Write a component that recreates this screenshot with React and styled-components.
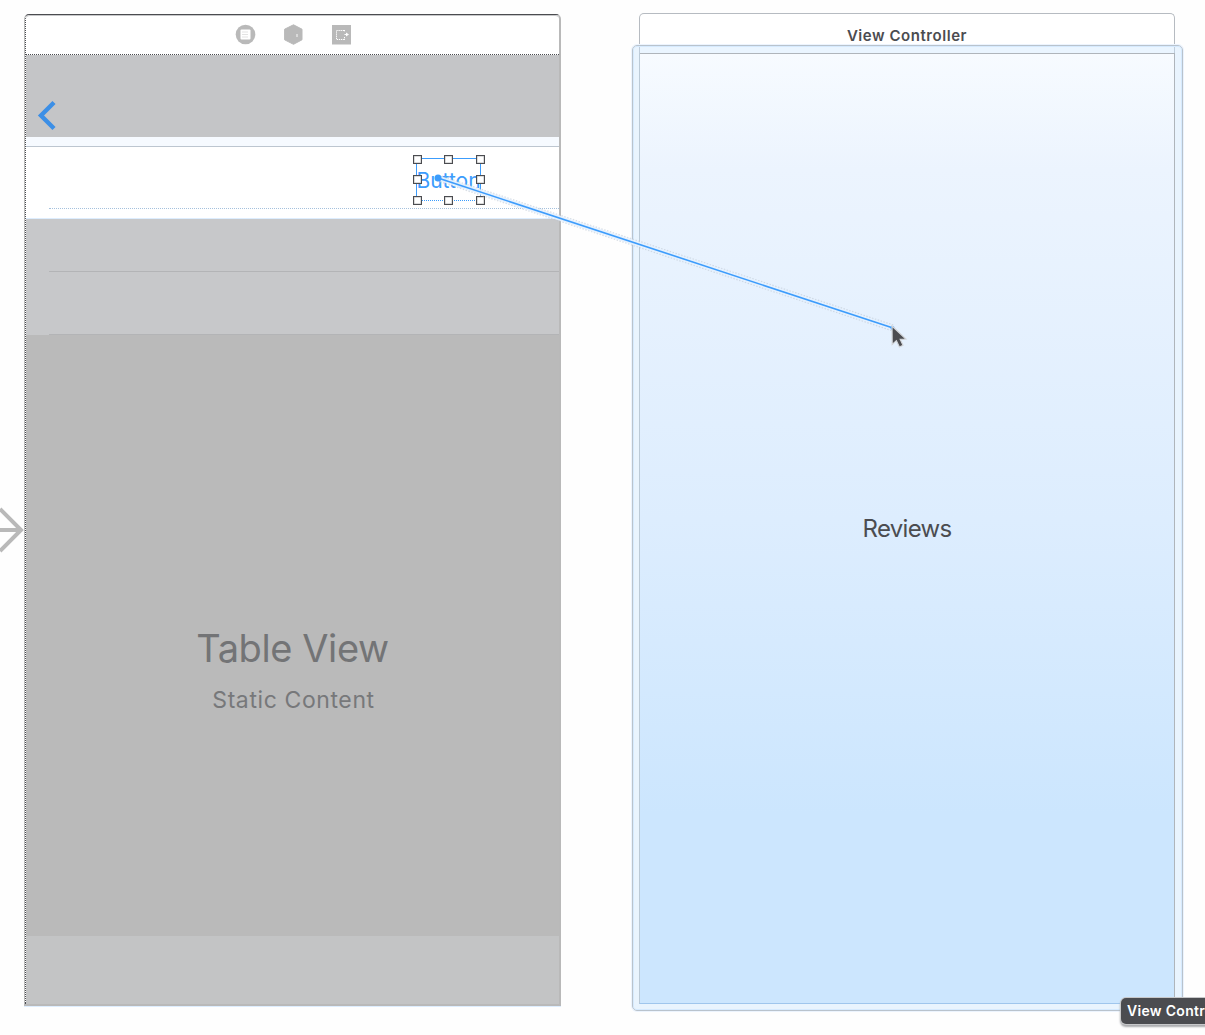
import React from "react";
import styled, { createGlobalStyle } from "styled-components";

const GlobalStyle = createGlobalStyle`
  * { box-sizing: border-box; }
  html, body { margin: 0; background: #fff; overflow: hidden; }
`;

const Canvas = styled.main`
  position: relative;
  display: flex;
  gap: 78px;
  width: 1205px;
  height: 1035px;
  padding: 13px 0 0 24px;
  overflow: hidden;
  background: #fefefe;
  font-family: Inter, "Liberation Sans", sans-serif;
`;

const TableScene = styled.section`
  display: flex;
  flex-direction: column;
  flex: none;
  width: 537px;
  height: 992px;
  margin-top: 1px;
  border-top: 1px solid #4b4c50;
  border-left: 1px solid #b9b9b9;
  border-right: 2px solid #b9b9b9;
  border-bottom: 2px solid #b9b9b9;
  border-radius: 5px 5px 0 0;
  box-shadow: 0 1px 0 #ddedfe;
`;

const SceneBody = styled.div`
  display: flex;
  flex: 1;
  flex-direction: column;
  border-left: 1px dotted #4b4c50;
  border-radius: 4px 0 0 0;
`;

const Dock = styled.header`
  display: flex;
  align-items: center;
  justify-content: center;
  gap: 27px;
  height: 40px;
  padding: 0 0 2px 2px;
  border-top: 1px solid #c7c8ca;
  border-bottom: 1px dotted #4b4c50;
  border-radius: 4px 4px 0 0;
  background: #fff;
`;

const DockIcon = styled.svg`
  display: block;
  width: 21px;
  height: 21px;
`;

const NavigationBar = styled.div`
  display: flex;
  align-items: flex-end;
  height: 82px;
  padding: 0 0 5px 11px;
  background: #c4c5c7;
`;

const BackChevron = styled.svg`
  width: 20px;
  height: 32px;
`;

const SectionGap = styled.div`
  height: 10px;
  border-bottom: 1px solid #bdc6d0;
  background: #f6faff;
`;

const ActiveCell = styled.div`
  display: flex;
  flex-direction: column;
  align-items: flex-end;
  height: 72px;
  padding: 11px 0 0 23px;
  border-bottom: 1px solid #ddedfe;
  background: #fff;
`;

const SelectedButton = styled.div`
  position: relative;
  display: flex;
  align-items: center;
  justify-content: center;
  width: 65px;
  height: 43px;
  margin-right: 78px;
  padding-top: 1px;
  border: 1px solid #3c9cfc;
  border-bottom-style: dotted;
  color: #3c9cfc;
  font-size: 21px;
  line-height: 25px;
  letter-spacing: 0;
  white-space: nowrap;
`;

const Handle = styled.i`
  position: absolute;
  top: calc(${({ $y }) => $y} - 4.5px);
  left: calc(${({ $x }) => $x} - 4.5px);
  width: 9px;
  height: 9px;
  border: 1px solid #4b4c50;
  box-shadow: inset 0 0 0 0.5px #b9b9b9;
  background: #fff;
`;

const CellSeparator = styled.div`
  align-self: stretch;
  height: 1px;
  margin-top: 7px;
  border-top: 1px dotted #a5c1dd;
`;

const DimCell = styled.div`
  height: ${({ $height }) => $height}px;
  padding-left: 23px;
  display: flex;
  align-items: flex-end;
  background: #c7c8ca;

  &::after {
    content: "";
    flex: 1;
    height: 1px;
    background: #b3b4b6;
  }
`;

const TablePlaceholder = styled.div`
  display: flex;
  flex: 1;
  flex-direction: column;
  align-items: center;
  padding-top: 289px;
  background: #bababa;
`;

const TableTitle = styled.div`
  color: #737476;
  font-size: 38px;
  line-height: 48px;
  letter-spacing: -0.4px;
`;

const TableSubtitle = styled.div`
  margin-top: 13px;
  padding-left: 2px;
  color: #77787a;
  font-size: 23px;
  line-height: 30px;
  letter-spacing: 0.6px;
`;

const BottomBar = styled.div`
  height: 68px;
  background: #c3c4c5;
`;

const ControllerScene = styled.section`
  position: relative;
  display: flex;
  flex-direction: column;
  width: 536px;
  height: 991px;
  flex: none;
`;

const ControllerTitle = styled.header`
  display: flex;
  align-items: center;
  justify-content: center;
  height: 40px;
  padding-top: 3px;
  border: 1px solid #b6bbc1;
  border-bottom: 0;
  border-radius: 5px 5px 0 0;
  background: #fff;
  color: #4b4c50;
  font-size: 15px;
  font-weight: 600;
  letter-spacing: 0.55px;
`;

const ControllerView = styled.div`
  display: flex;
  flex: 1;
  align-items: center;
  justify-content: center;
  border: 1px solid #afb5bb;
  border-bottom-color: #7fafe0;
  background: linear-gradient(#f7fbff 0, #ecf4fe 115px, #ddedfe 465px, #cce6fe 760px);
  color: #4b4c50;
  font-size: 24px;
  letter-spacing: -0.7px;
`;

const DropHighlight = styled.div`
  position: absolute;
  inset: 32px -8px -7px -7px;
  border: 1px solid #b9c3cd;
  border-radius: 5px;
  box-shadow: inset 0 0 0 1px #ddedfe, 0 0 0 1px #ecf4fe;

  &::before {
    content: "";
    position: absolute;
    inset: 0;
    border: 7px solid rgba(204, 230, 254, 0.42);
    border-radius: 4px;
  }
`;

const Tooltip = styled.div`
  position: absolute;
  top: 998px;
  left: 1121px;
  height: 26px;
  padding: 0 7px 0 6px;
  border-radius: 5px;
  background: #4b4c50;
  box-shadow: 0 0 0 1px #c7c8ca, 0 2px 2px 1px #a9aaad;
  color: #fff;
  font-size: 14px;
  font-weight: 600;
  line-height: 26px;
  letter-spacing: 0.3px;
  white-space: nowrap;
`;

const ConnectionLayer = styled.svg`
  position: absolute;
  inset: 0;
  width: 1205px;
  height: 1035px;
  pointer-events: none;
`;

const positions = ["0%", "50%", "100%"];
const handles = positions.flatMap((y) =>
  positions.map((x) => ({ x, y })).filter((p) => !(p.x === "50%" && p.y === "50%"))
);

function DockIcons() {
  return (
    <>
      <DockIcon viewBox="0 0 21 21">
        <circle cx="10.5" cy="10.5" r="9.8" fill="#b9b9b9" />
        <rect x="5.5" y="5.5" width="10" height="10" rx="1" fill="#fff" />
        <path d="M7.5 8h6M7.5 10.5h6M7.5 13h6" stroke="#b9b9b9" strokeWidth=".8" strokeDasharray="1 1" />
      </DockIcon>
      <DockIcon viewBox="0 0 21 21">
        <path d="M10.5.8 19 5.2v10.6l-8.5 4.5L1.6 15.8V5.2Z" fill="#b9b9b9" stroke="#b9b9b9" strokeLinejoin="round" />
        <path d="M14 10v3" stroke="#eee" strokeWidth="1.2" />
      </DockIcon>
      <DockIcon viewBox="0 0 21 21">
        <rect x="1" y="1" width="19" height="19.5" fill="#b9b9b9" />
        <path d="M13 6.5H5.5v9H13M13.5 6v2M13.5 13v3" fill="none" stroke="#fff" strokeDasharray="1.3 .8" />
        <path d="M13.5 10H15V8.5l3 2-3 2V11h-1.5Z" fill="#fff" />
      </DockIcon>
    </>
  );
}

export default function App() {
  return (
    <>
      <GlobalStyle />
      <Canvas>
        <TableScene>
          <SceneBody>
            <Dock><DockIcons /></Dock>
            <NavigationBar>
              <BackChevron viewBox="0 0 20 32">
                <path d="M17 2.5 4 15.5 17 28.5" fill="none" stroke="#3c8fe6" strokeWidth="4.4" />
              </BackChevron>
            </NavigationBar>
            <SectionGap />
            <ActiveCell>
              <SelectedButton>
                Button
                {handles.map(({ x, y }) => <Handle key={x + y} $x={x} $y={y} />)}
              </SelectedButton>
              <CellSeparator />
            </ActiveCell>
            <DimCell $height={53} />
            <DimCell $height={63} />
            <TablePlaceholder>
              <TableTitle>Table View</TableTitle>
              <TableSubtitle>Static Content</TableSubtitle>
            </TablePlaceholder>
            <BottomBar />
          </SceneBody>
        </TableScene>
        <ControllerScene>
          <ControllerTitle>View Controller</ControllerTitle>
          <ControllerView>Reviews</ControllerView>
          <DropHighlight />
        </ControllerScene>
        <ConnectionLayer viewBox="0 0 1205 1035">
          <path d="m0 509 21 21L0 551M0 530h20" fill="none" stroke="#b9b9b9" strokeWidth="4" />
          <path d="M438 178 893 328" stroke="#b9c3cd" strokeOpacity=".55" strokeWidth="7" strokeDasharray="1.5 1.5" />
          <path d="M438 178 893 328" stroke="#e6f2ff" strokeWidth="5" strokeOpacity=".9" />
          <path d="M438 178 893 328" stroke="#3c9cfc" strokeWidth="1.6" />
          <circle cx="438" cy="178" r="3.5" fill="#3c9cfc" />
          <circle cx="892.5" cy="328" r="2" fill="#3c9cfc" />
          <path d="m892 326 .2 18.5 4.2-3.8 3 6.3 3.6-1.8-2.8-5.8 5.7-.4Z" fill="#4b4c50" stroke="#d3d6da" strokeWidth="1.2" />
        </ConnectionLayer>
        <Tooltip>View Controller</Tooltip>
      </Canvas>
    </>
  );
}
